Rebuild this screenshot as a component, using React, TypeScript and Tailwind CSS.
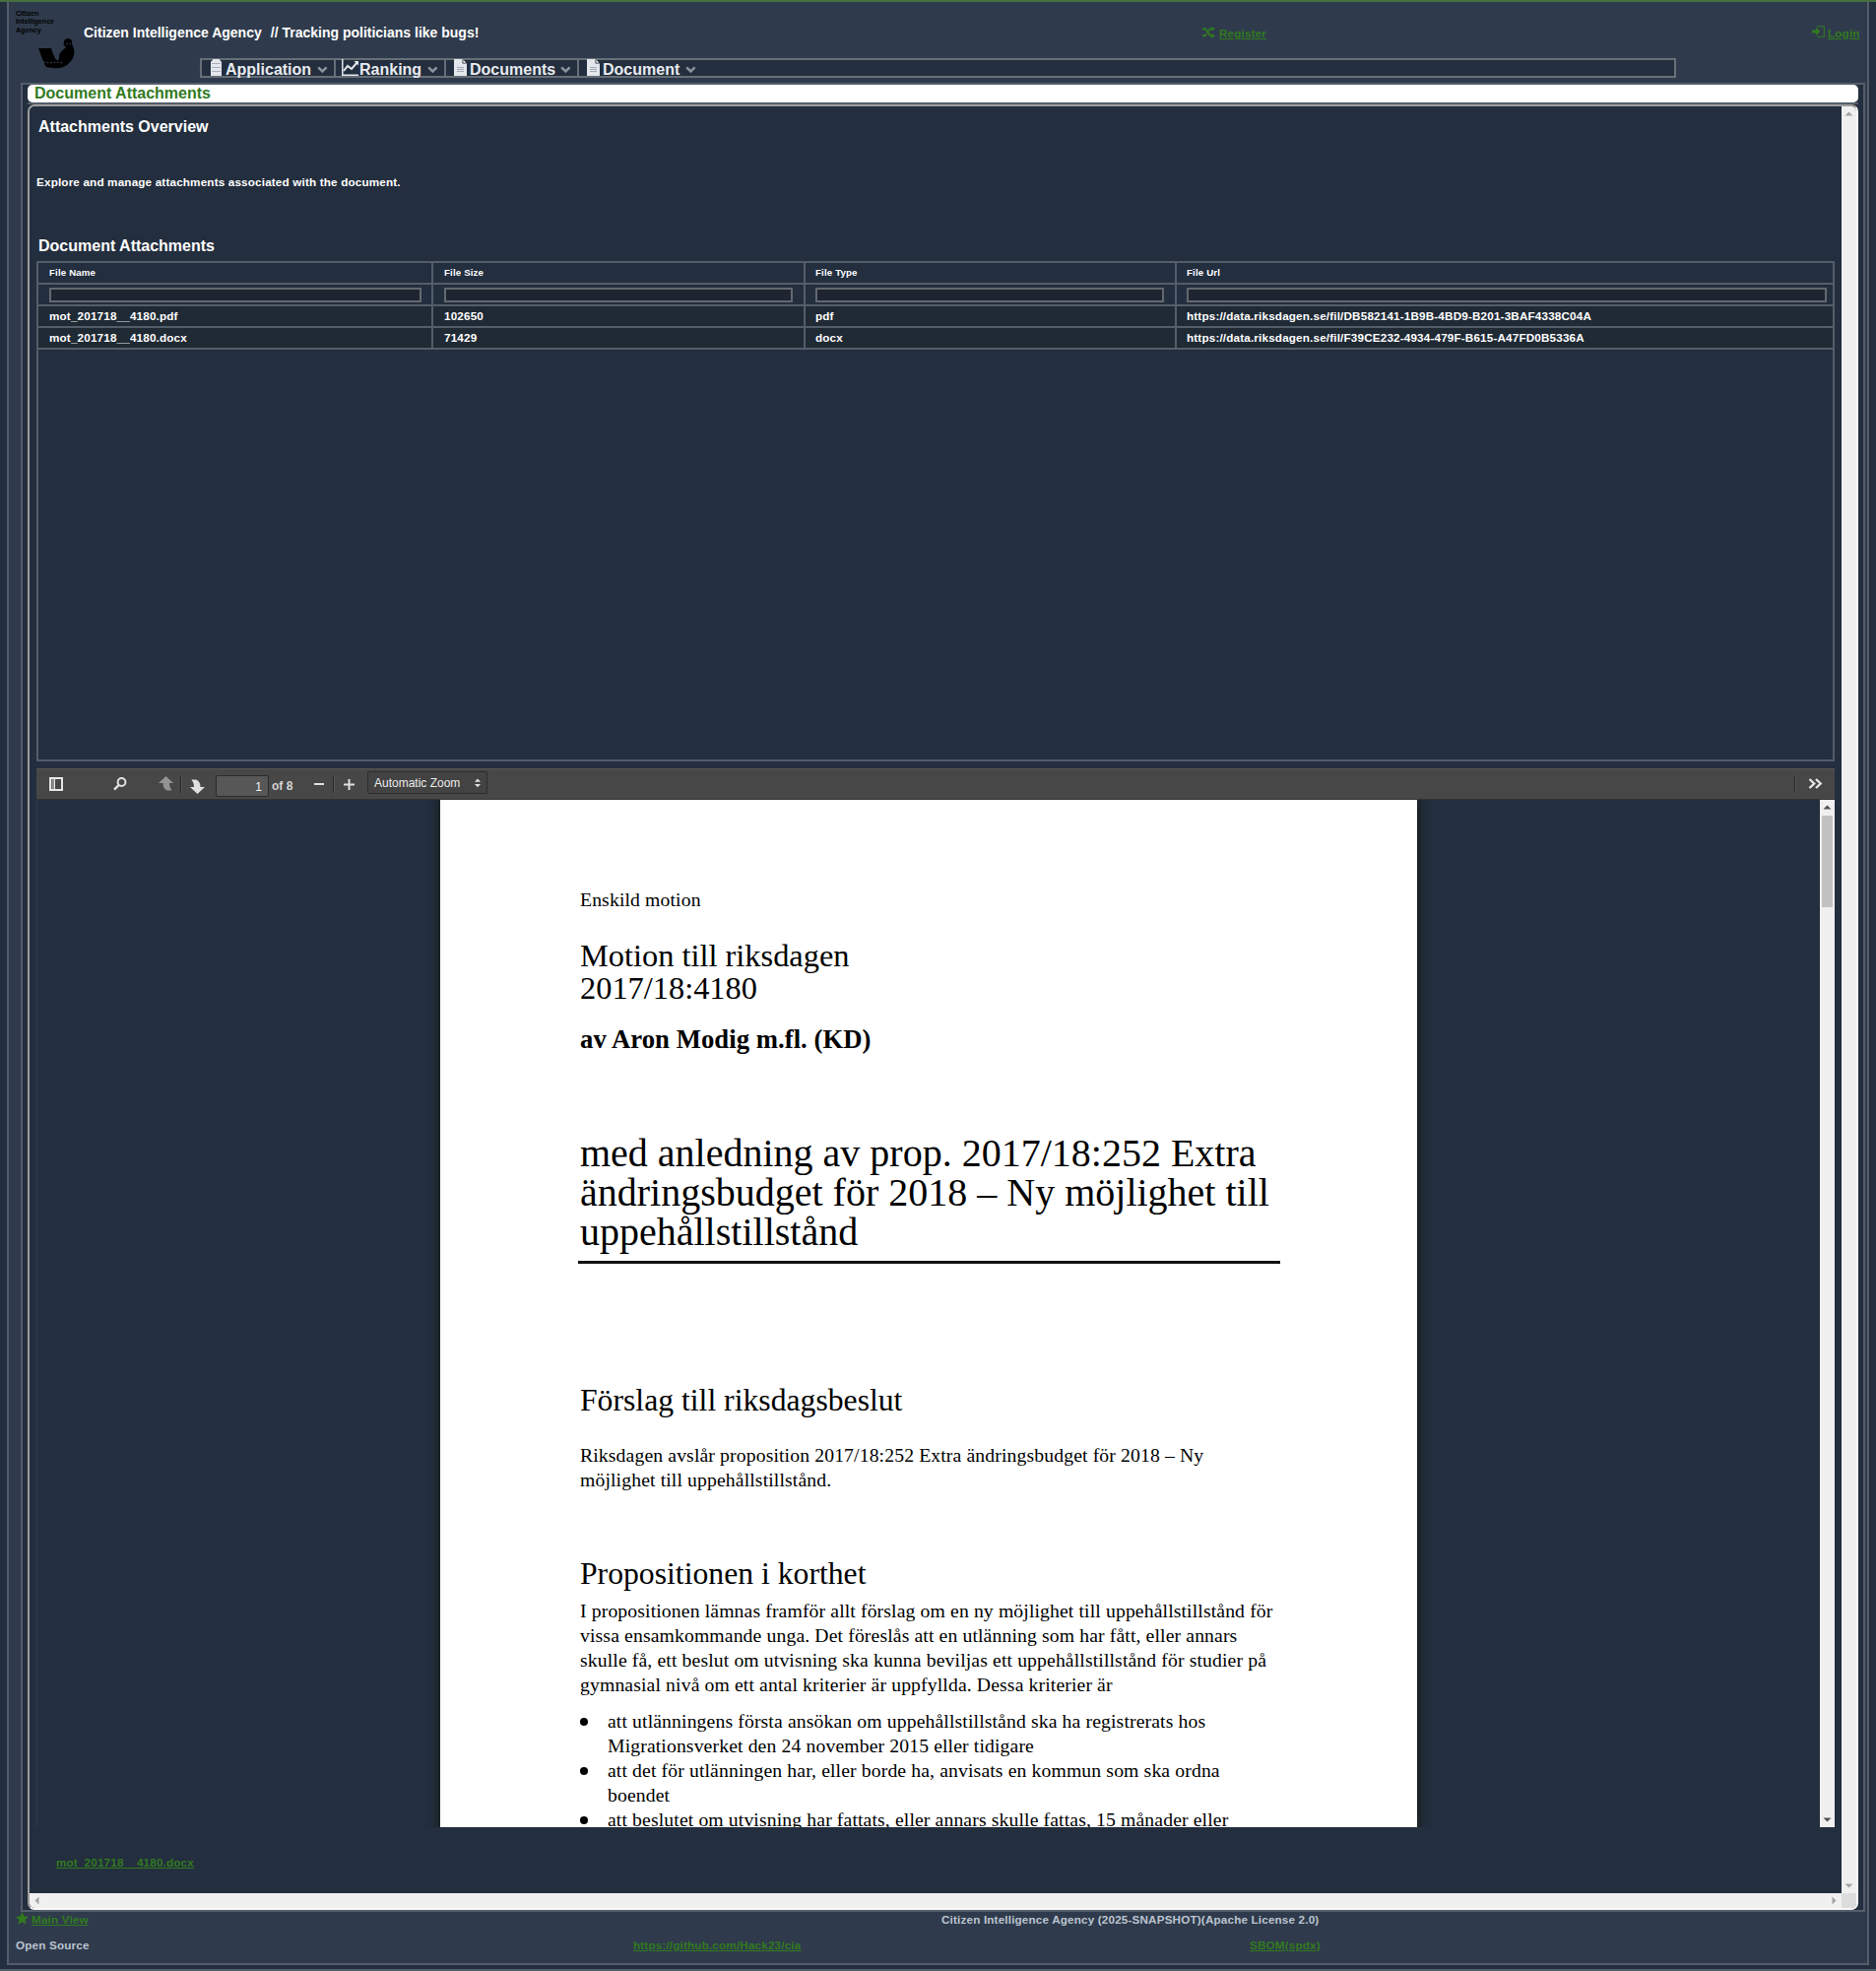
import React from "react";

const columns = ["File Name", "File Size", "File Type", "File Url"];
const files = [
  ["mot_201718__4180.pdf", "102650", "pdf", "https://data.riksdagen.se/fil/DB582141-1B9B-4BD9-B201-3BAF4338C04A"],
  ["mot_201718__4180.docx", "71429", "docx", "https://data.riksdagen.se/fil/F39CE232-4934-479F-B615-A47FD0B5336A"],
];
const gridCols = "grid grid-cols-[401px_378px_377px_666px]";
const cellClasses = [
  "border-r-2 border-[#545d6a] pl-[11px]",
  "border-r-2 border-[#545d6a] pl-[11px]",
  "border-r-2 border-[#545d6a] pl-[10px]",
  "pl-[10px]",
];
const filterClasses = ["pr-[10px]", "pr-[11px]", "pr-[11px]", "pr-[6px]"];
const small = "text-[11.7px] tracking-[0.165px]";

function Logo() {
  return (
    <div className="relative w-[76px] shrink-0 pl-[7px] pt-[8px] text-black">
      <div className="text-[7.1px] leading-[8.4px] font-bold">
        Citizen
        <br />
        Intelligence
        <br />
        Agency
      </div>
      <svg className="absolute left-[29px] top-[35px]" width="40" height="34" viewBox="0 0 40 34">
        <path d="M1 12h13l2 6 3 6h2c2-2 0-4 2-7 2-3 4-4 6-6-2-2-3-3-2-6 1-4 7-4 8 0 0 2 0 3 1 5 2 4 2 8 0 12-3 5-6 8-11 9.500-5 1-11 1-16-.5l-2-3z" fill="#000" />
        <path d="M29 8l5-1M6 26l6 1 8-1 6 1" stroke="#55606c" strokeWidth=".7" strokeDasharray="2 1.5" fill="none" />
      </svg>
    </div>
  );
}

function Chevron() {
  return (
    <svg className="ml-auto mr-[6px] mt-[6px] shrink-0" width="11" height="8" viewBox="0 0 11 8">
      <path d="M1.2 1.4l4.2 4 4.2-4" fill="none" stroke="#8a939b" strokeWidth="2.6" />
    </svg>
  );
}

function ServerIcon() {
  return (
    <svg className="-mt-px mr-[4px] shrink-0" width="11" height="17" viewBox="0 0 11 17">
      <path d="M2.500 0h6L11 3v14H0V3z" fill="#e4e7ec" />
      <path d="M1 4.500h9M1 8.500h9M1 12.500h9" stroke="#a9b0b9" />
    </svg>
  );
}

function ChartIcon() {
  return (
    <svg className="-mt-px mr-px shrink-0" width="17" height="17" viewBox="0 0 17 17">
      <path d="M.8 0v16.200H17" fill="none" stroke="#e4e7ec" strokeWidth="1.500" />
      <path d="M2 12l4-5 4 3 6-7" fill="none" stroke="#e4e7ec" strokeWidth="2" />
      <path d="M12.500 2H17v4.500z" fill="#e4e7ec" />
    </svg>
  );
}

function FileIcon() {
  return (
    <svg className="-mt-px mr-[3px] shrink-0" width="13" height="17" viewBox="0 0 13 17">
      <path d="M0 0h8.500v4.500H13V17H0z" fill="#e4e7ec" />
      <path d="M9.300 .5l3.200 3.200H9.300z" fill="#e4e7ec" />
      <path d="M3 8.500h7M3 10.500h7M3 12.500h7" stroke="#a4abb5" />
    </svg>
  );
}

function MenuItem({ icon, label, className }: { icon: React.ReactNode; label: string; className: string }) {
  return (
    <div className={`flex h-4 items-start text-base leading-[19px] font-bold text-[#e8ebf0] ${className}`}>
      {icon}
      <span>{label}</span>
      <Chevron />
    </div>
  );
}

function Arrow({ dir, color }: { dir: "up" | "down" | "left" | "right"; color: string }) {
  const d = {
    up: "M3.500 9.500h8L7.500 5.500z",
    down: "M3.500 5.500h8l-4 4z",
    left: "M9.500 3.500v8l-4-4z",
    right: "M5.500 3.500v8l4-4z",
  }[dir];
  return (
    <svg width="15" height="15" viewBox="0 0 15 15" className="shrink-0">
      <path d={d} fill={color} />
    </svg>
  );
}

function Header() {
  return (
    <header className="flex h-[82px]">
      <Logo />
      <div className="flex-1">
        <div className="flex h-[57px] pt-[21px]">
          <div className="flex w-[1136px] text-sm leading-5 font-bold text-white">
            <span className="mr-[9px]">Citizen Intelligence Agency</span>
            <span>// Tracking politicians like bugs!</span>
          </div>
          <div className={`flex w-[619px] pt-px leading-5 font-bold text-[#317a1e] ${small}`}>
            <svg className="mt-[3px] mr-[4px]" width="13" height="12" viewBox="0 0 13 12">
              <path d="M0 2.200h3l5 7h2M0 9.200h3l1.200-1.700M6.200 4.500L8 2.200h2" fill="none" stroke="#317a1e" strokeWidth="2" />
              <path d="M9.500 0v4.600L13 2.300zM9.500 7v4.800L13 9.400z" fill="#317a1e" />
            </svg>
            <a className="underline">Register</a>
          </div>
          <div className={`flex pt-px leading-5 font-bold text-[#317a1e] ${small}`}>
            <svg className="mt-[2px] mr-[3px]" width="13" height="12" viewBox="0 0 13 12">
              <path d="M6 2V.7h6.300v10.600H6V10" fill="none" stroke="#317a1e" strokeWidth="1.100" />
              <path d="M0 4.500h4V2l4.500 4L4 10V7.500H0z" fill="#317a1e" />
            </svg>
            <a className="underline">Login</a>
          </div>
        </div>
        <nav className="ml-[118px] flex h-5 w-[1499px] border-2 border-[#676f77] bg-[#232e3e]">
          <MenuItem icon={<ServerIcon />} label="Application" className="w-[136px] border-r-2 border-[#676f77] pl-[9px]" />
          <MenuItem icon={<ChartIcon />} label="Ranking" className="w-[112px] border-r-2 border-[#676f77] pl-[6px]" />
          <MenuItem icon={<FileIcon />} label="Documents" className="w-[135px] border-r-2 border-[#676f77] pl-[8px]" />
          <MenuItem icon={<FileIcon />} label="Document" className="w-[125px] pl-[8px]" />
        </nav>
      </div>
    </header>
  );
}

function AttachmentTable() {
  return (
    <div className="h-[508px] w-[1826px] border-2 border-[#545d6a] font-bold text-white">
      <div className={`${gridCols} h-[22px] border-b-2 border-[#545d6a] text-[9.7px] leading-[19px] tracking-[0.15px]`}>
        {columns.map((c, i) => (
          <div key={c} className={cellClasses[i]}>{c}</div>
        ))}
      </div>
      <div className={`${gridCols} h-[22px] border-b-2 border-[#545d6a]`}>
        {columns.map((c, i) => (
          <div key={c} className={`pt-[3px] ${cellClasses[i]} ${filterClasses[i]}`}>
            <div className="h-[15px] border-2 border-[#63696f] bg-[#1f2431]" />
          </div>
        ))}
      </div>
      {files.map((row) => (
        <div key={row[0]} className={`${gridCols} h-[22px] border-b-2 border-[#545d6a] bg-[#1f2a35] leading-5 ${small}`}>
          {row.map((cell, i) => (
            <div key={cell} className={cellClasses[i]}>{cell}</div>
          ))}
        </div>
      ))}
    </div>
  );
}

function Separator({ className }: { className: string }) {
  return <div className={`h-[17px] w-[2px] shrink-0 border-r border-l border-r-[#5a5a5a] border-l-[#262626] ${className}`} />;
}

function PdfToolbar() {
  return (
    <div className="flex h-8 items-start border-t border-b border-t-[#555] border-b-[#333] bg-[#474747] text-xs font-normal whitespace-nowrap text-[#dcdcdc]">
      <svg className="mt-[8px] ml-[13px] shrink-0" width="14" height="14" viewBox="0 0 14 14">
        <path d="M1 1h12v12H1z" fill="#474747" stroke="#e6e6e6" strokeWidth="2" />
        <path d="M2.500 2H5v10H2.500z" fill="#8f8f8f" />
        <path d="M5.500 1v12" stroke="#e6e6e6" strokeWidth="1" />
      </svg>
      <svg className="mt-[8px] ml-[51px] shrink-0" width="14" height="14" viewBox="0 0 14 14">
        <circle cx="8.500" cy="5" r="3.900" fill="none" stroke="#e0e0e0" strokeWidth="2" />
        <path d="M5.800 7.800L1 12.600" stroke="#e0e0e0" strokeWidth="2.400" />
      </svg>
      <svg className="mt-[7px] ml-[32px] shrink-0" width="15" height="15" viewBox="0 0 15 15">
        <path d="M7.500 0L15 7h-4c0 3 .6 4.500 2.600 7.500H9C6 13.500 4.500 11 4.500 7H0z" fill="#939393" />
      </svg>
      <Separator className="mt-[7px] ml-[7px]" />
      <svg className="mt-[10px] ml-[8px] shrink-0" width="15" height="15" viewBox="0 0 15 15">
        <path d="M7.500 15L0 8h4c0-3-.6-4.500-2.600-7.500H6C9 1.500 10.500 4 10.500 8H15z" fill="#e0e0e0" />
      </svg>
      <div className="mt-[6px] ml-[11px] h-[22px] w-[54px] shrink-0 rounded-[2px] border border-[#2c2c2c] bg-[#575757] pr-[6px] text-right leading-[22px] text-[#f0f0f0]">1</div>
      <div className="mt-[6px] ml-[3px] w-[43px] shrink-0 leading-[22px] font-bold text-[#d4d4d4]">of 8</div>
      <div className="mt-[14px] h-[2px] w-[10px] shrink-0 bg-[#e0e0e0]" />
      <Separator className="mt-[7px] ml-[9px]" />
      <svg className="mt-[10px] ml-[9px] shrink-0" width="11" height="11" viewBox="0 0 11 11">
        <path d="M0 5.500h11M5.500 0v11" stroke="#e0e0e0" strokeWidth="2" />
      </svg>
      <div className="mt-[2px] ml-[13px] flex h-[23px] w-[122px] shrink-0 rounded-[2px] border border-[#2c2c2c] bg-[#434343] pl-[6px] leading-[22px] text-[#ececec]">
        Automatic Zoom
        <svg className="mt-[6px] ml-[15px]" width="6" height="10" viewBox="0 0 6 10">
          <path d="M0 3.800L3 .5l3 3.300zM0 6l3 3.300L6 6z" fill="#e0e0e0" />
        </svg>
      </div>
      <Separator className="mt-[7px] ml-auto" />
      <svg className="mt-[9px] mr-[12px] ml-[12px] shrink-0" width="15" height="11" viewBox="0 0 15 11">
        <path d="M1.500 1l4.700 4.500L1.500 10M8 1l4.700 4.500L8 10" fill="none" stroke="#e4e4e4" strokeWidth="2.400" />
      </svg>
    </div>
  );
}

function Bullet({ lines }: { lines: string[] }) {
  return (
    <div className="flex">
      <div className="mt-[9px] mr-[20px] h-2 w-2 rounded-full bg-black" />
      <div>
        {lines.map((l) => (
          <div key={l}>{l}</div>
        ))}
      </div>
    </div>
  );
}

function PdfPage() {
  return (
    <div className="ml-[409px] h-[1043px] w-[992px] overflow-hidden bg-white pt-[89px] pl-[142px] font-['Liberation_Serif',serif] text-[19.7px] leading-[25px] font-normal tracking-[0.125px] whitespace-nowrap text-black shadow-[0_0_8px_3px_#18201f]">
      <div>Enskild motion</div>
      <div className="mt-[28px] text-[32.4px] leading-[33px] tracking-normal">
        <div>Motion till riksdagen</div>
        <div>2017/18:4180</div>
      </div>
      <div className="mt-[20px] text-[26.7px] leading-[30px] font-bold tracking-[0.04px]">av Aron Modig m.fl. (KD)</div>
      <div className="mt-[81px] text-[40px] leading-[40px] tracking-normal">
        <div>med anledning av prop. 2017/18:252 Extra</div>
        <div>ändringsbudget för 2018 – Ny möjlighet till</div>
        <div>uppehållstillstånd</div>
      </div>
      <div className="mt-[9px] -ml-[2px] h-[3px] w-[713px] bg-[#111]" />
      <div className="mt-[121px] text-[31.7px] leading-[36px] tracking-normal">Förslag till riksdagsbeslut</div>
      <div className="mt-[25px]">
        <div>Riksdagen avslår proposition 2017/18:252 Extra ändringsbudget för 2018 – Ny</div>
        <div>möjlighet till uppehållstillstånd.</div>
      </div>
      <div className="mt-[65px] text-[31.7px] leading-[36px] tracking-normal">Propositionen i korthet</div>
      <div className="mt-[7px]">
        <div>I propositionen lämnas framför allt förslag om en ny möjlighet till uppehållstillstånd för</div>
        <div>vissa ensamkommande unga. Det föreslås att en utlänning som har fått, eller annars</div>
        <div>skulle få, ett beslut om utvisning ska kunna beviljas ett uppehållstillstånd för studier på</div>
        <div>gymnasial nivå om ett antal kriterier är uppfyllda. Dessa kriterier är</div>
      </div>
      <div className="mt-[12px]">
        <Bullet lines={["att utlänningens första ansökan om uppehållstillstånd ska ha registrerats hos", "Migrationsverket den 24 november 2015 eller tidigare"]} />
        <Bullet lines={["att det för utlänningen har, eller borde ha, anvisats en kommun som ska ordna", "boendet"]} />
        <Bullet lines={["att beslutet om utvisning har fattats, eller annars skulle fattas, 15 månader eller"]} />
      </div>
    </div>
  );
}

function PdfViewer() {
  return (
    <div className="mt-[7px] w-[1826px]">
      <PdfToolbar />
      <div className="flex h-[1043px] justify-between overflow-hidden border-l border-[#2f3a49]">
        <PdfPage />
        <div className="z-10 flex w-[15px] flex-col items-center bg-[#f0f0f0]">
          <Arrow dir="up" color="#505050" />
          <div className="mt-px h-[93px] w-[11px] bg-[#c1c1c1]" />
          <div className="mt-auto h-[15px]">
            <Arrow dir="down" color="#505050" />
          </div>
        </div>
      </div>
    </div>
  );
}

function Footer() {
  return (
    <footer className={`pl-[7px] font-bold text-[#bcc4d0] ${small}`}>
      <div className="flex h-[25px] leading-4">
        <div className="flex w-[940px] text-[#317a1e]">
          <svg className="mr-[3px]" width="13" height="13" viewBox="0 0 13 13">
            <path d="M6.500 0l1.900 4.500 4.600.4-3.500 3.200 1.100 4.700-4.100-2.500-4.100 2.500 1.100-4.700L0 4.900l4.600-.4z" fill="#317a1e" />
          </svg>
          <a className="underline">Main View</a>
        </div>
        <div>Citizen Intelligence Agency (2025-SNAPSHOT)(Apache License 2.0)</div>
      </div>
      <div className="flex leading-[18px]">
        <div className="w-[627px]">Open Source</div>
        <div className="w-[626px] text-[#317a1e]">
          <a className="underline">https://github.com/Hack23/cia</a>
        </div>
        <a className="text-[#317a1e] underline">SBOM(spdx)</a>
      </div>
    </footer>
  );
}

export default function App() {
  return (
    <div className="h-[2001px] w-[1905px] overflow-hidden border-t-2 border-b-2 border-t-[#44703f] border-b-[#545d6a] bg-[#232e3e] font-['Liberation_Sans',Arial,sans-serif]">
      <div className="ml-[7px] h-[1993px] w-[1891px] border-x-2 border-b-2 border-[#545d6a] bg-[#2f3b4c]">
        <Header />
        <main className="mr-[2px] ml-[12px] h-[1857px] border-2 border-[#545d6a] bg-[#232e3e] pl-[5px]">
          <div className="h-[18px] w-[1859px] rounded-[5px] bg-white pl-[7px] text-base leading-[17px] font-bold text-[#317a1e]">Document Attachments</div>
          <div className="h-[2px] w-[1859px] bg-[#545d6a]" />
          <div className="flex h-[1833px] w-[1859px] flex-col overflow-hidden rounded-[7px] border-2 border-t-[#9c9c9a] border-r-[#f8f8f8] border-b-[#f8f8f8] border-l-[#9c9c9a]">
            <div className="flex h-[1814px]">
              <div className="w-[1840px] pl-[7px] font-bold text-white">
                <h2 className="pt-[11px] pl-[2px] text-base leading-5">Attachments Overview</h2>
                <p className={`mt-[36px] leading-5 ${small}`}>Explore and manage attachments associated with the document.</p>
                <h2 className="mt-[45px] mb-[5px] pl-[2px] text-base leading-5">Document Attachments</h2>
                <AttachmentTable />
                <PdfViewer />
                <div className={`mt-[26px] pl-[20px] leading-5 text-[#317a1e] ${small}`}>
                  <a className="underline">mot_201718__4180.docx</a>
                </div>
              </div>
              <div className="flex w-[15px] flex-col justify-between bg-[#f0f0f0]">
                <Arrow dir="up" color="#a3a3a3" />
                <Arrow dir="down" color="#a3a3a3" />
              </div>
            </div>
            <div className="flex h-[15px] bg-[#f0f0f0]">
              <Arrow dir="left" color="#a3a3a3" />
              <div className="ml-auto h-[15px]">
                <Arrow dir="right" color="#a3a3a3" />
              </div>
              <div className="w-[15px] bg-[#dcdcdc]" />
            </div>
          </div>
        </main>
        <Footer />
      </div>
    </div>
  );
}
